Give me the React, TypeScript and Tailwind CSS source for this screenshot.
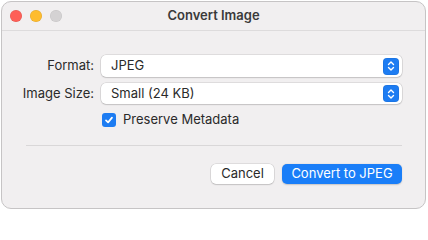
import { useState } from 'react'

const font = { fontFamily: 'Inter, "Liberation Sans", Arial, sans-serif' }

function Stepper() {
  return (
    <div className="flex h-[17px] w-[16px] items-center justify-center rounded-[4px] bg-[#1d7cf2] shadow-[inset_0_0_0_0.5px_rgba(0,0,0,0.1)]">
      <svg width="8" height="12" viewBox="0 0 8 12" fill="none">
        <path d="M1.5 4.5 L4 2 L6.5 4.5" stroke="white" strokeWidth="1.4" strokeLinecap="round" strokeLinejoin="round" />
        <path d="M1.5 7.5 L4 10 L6.5 7.5" stroke="white" strokeWidth="1.4" strokeLinecap="round" strokeLinejoin="round" />
      </svg>
    </div>
  )
}

function PopUp({ value, className }: { value: string; className?: string }) {
  return (
    <div
      className={`flex items-center justify-between rounded-[5px] bg-white pl-[10px] pr-[3px] text-[13px] text-[#2a2a2a] shadow-[0_0_0_0.5px_rgba(0,0,0,0.16),0_1px_1.5px_rgba(0,0,0,0.12)] ${className ?? ''}`}
    >
      <span>{value}</span>
      <Stepper />
    </div>
  )
}

export default function App() {
  const [preserve, setPreserve] = useState(true)

  return (
    <div className="h-[211px] w-[428px] bg-white pl-[1px] pt-[1px]" style={font}>
      <div className="flex h-[208px] w-[425px] flex-col overflow-hidden rounded-[10px] border border-[#c6c4c5] bg-[#f1eff0]">
        <div className="grid h-[29px] shrink-0 grid-cols-[1fr_auto_1fr] items-center border-b border-[#dddbdc]">
          <div className="flex items-center gap-[8px] pl-[8px]">
            <span className="h-[12px] w-[12px] rounded-full bg-[#fe5f57] shadow-[inset_0_0_0_0.5px_rgba(0,0,0,0.12)]" />
            <span className="h-[12px] w-[12px] rounded-full bg-[#febc2e] shadow-[inset_0_0_0_0.5px_rgba(0,0,0,0.12)]" />
            <span className="h-[12px] w-[12px] rounded-full bg-[#d4d2d3] shadow-[inset_0_0_0_0.5px_rgba(0,0,0,0.08)]" />
          </div>
          <div className="text-[13px] font-semibold text-[#3a3a3a]">Convert Image</div>
          <div />
        </div>

        <div className="flex flex-1 flex-col pr-[23px] pt-[24px]">
          <div className="grid grid-cols-[92px_1fr] items-center gap-x-[7px] gap-y-[6px]">
            <span className="text-right text-[13px] text-[#2a2a2a]">Format:</span>
            <PopUp value="JPEG" className="h-[22px]" />
            <span className="text-right text-[13px] text-[#2a2a2a]">Image Size:</span>
            <PopUp value="Small (24 KB)" className="h-[21px]" />
            <span />
            <label className="mt-[2px] flex h-[16px] cursor-default items-center gap-[7px] pl-[1px] text-[13px] text-[#2a2a2a]">
              <button
                type="button"
                onClick={() => setPreserve(!preserve)}
                className={`flex h-[14px] w-[14px] items-center justify-center rounded-[3px] ${
                  preserve ? 'bg-[#1d7cf2]' : 'bg-white shadow-[0_0_0_0.5px_rgba(0,0,0,0.25)]'
                }`}
              >
                {preserve && (
                  <svg width="10" height="10" viewBox="0 0 10 10" fill="none">
                    <path d="M2 5.3 L4.1 7.4 L8 2.6" stroke="white" strokeWidth="1.7" strokeLinecap="round" strokeLinejoin="round" />
                  </svg>
                )}
              </button>
              Preserve Metadata
            </label>
          </div>

          <div className="ml-[24px] mt-[17px] h-px bg-[#d9d7d8]" />

          <div className="mt-[18px] flex justify-end gap-[8px]">
            <button
              type="button"
              className="h-[20px] w-[63px] rounded-[5px] bg-white text-[13px] text-[#2a2a2a] shadow-[0_0_0_0.5px_rgba(0,0,0,0.16),0_1px_1.5px_rgba(0,0,0,0.12)]"
            >
              Cancel
            </button>
            <button
              type="button"
              className="h-[20px] w-[120px] rounded-[5px] bg-[#1a7ef8] text-[13px] text-white shadow-[0_0.5px_1.5px_rgba(0,0,0,0.18)]"
            >
              Convert to JPEG
            </button>
          </div>
        </div>
      </div>
    </div>
  )
}
